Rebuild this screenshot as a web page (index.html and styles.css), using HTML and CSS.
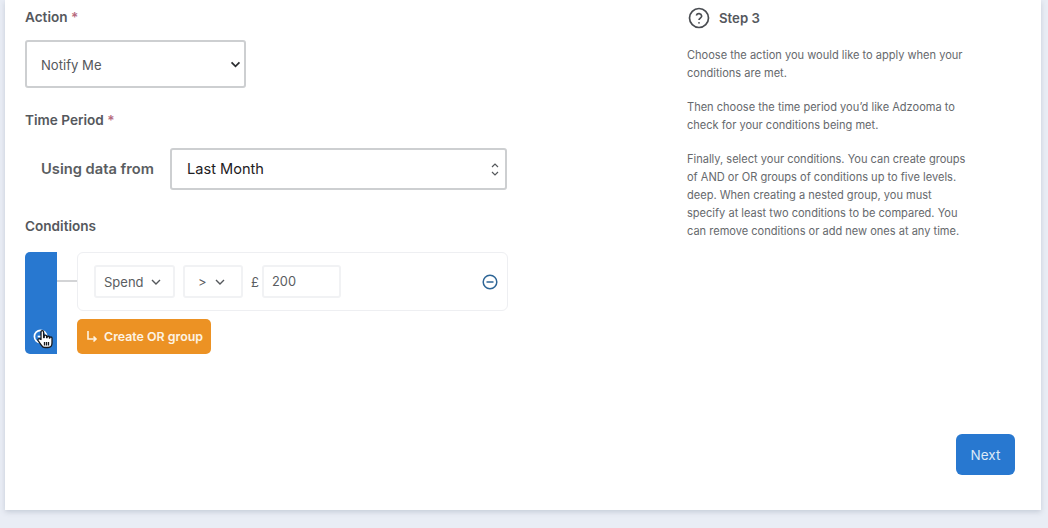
FILE: index.html
```html
<!DOCTYPE html>
<html lang="en">
<head>
<meta charset="utf-8">
<title>Step 3</title>
<link rel="stylesheet" href="styles.css">
</head>
<body>
<main class="card">
  <section class="form">
    <div class="label label-action">Action <span class="req">*</span></div>
    <div class="select select-action">
      <span class="action-text">Notify Me</span>
      <svg class="chev-bold" viewBox="0 0 12 8"><path d="M1.5 1.5 6 6l4.500-4.500"/></svg>
    </div>
    <div class="label label-time">Time Period <span class="req">*</span></div>
    <div class="period">
      <span class="period-label">Using data from</span>
      <div class="select select-period">
        <span>Last Month</span>
        <svg class="updown" viewBox="0 0 8 15"><path d="M1 5l3-3 3 3M1 10l3 3 3-3"/></svg>
      </div>
    </div>
    <div class="label label-cond">Conditions</div>
    <div class="builder">
      <div class="bar">
        <svg class="bar-icon" viewBox="0 0 16 16"><circle cx="8" cy="8" r="6.500"/><path d="M5 8h6"/></svg>
        <svg class="cursor" viewBox="0 0 18 20"><path d="M5.500 10.500V3a1.300 1.300 0 0 1 2.600 0v5.500h.6V7.300a1.200 1.200 0 0 1 2.400 0v1.400h.5V8a1.200 1.200 0 0 1 2.300 0v1h.4a1.100 1.100 0 0 1 2.200 0v5c0 2.500-1.500 4.500-4 4.500H9.500c-1.800 0-2.700-.9-3.500-2.200l-3.400-4.700c-.9-1.400 1-2.600 2-1.400z"/><path class="cursor-lines" d="M9 13v3.500M11 13v3.500M13 13v3.500"/></svg>
      </div>
      <div class="rows">
        <div class="row-wrap">
          <div class="connector"></div>
          <div class="row">
            <div class="mini mini-spend"><span>Spend</span><svg class="chev" viewBox="0 0 10 6"><path d="M1 1l4 4 4-4"/></svg></div>
            <div class="mini mini-op"><span>&gt;</span><svg class="chev" viewBox="0 0 10 6"><path d="M1 1l4 4 4-4"/></svg></div>
            <span class="pound">£</span>
            <div class="mini mini-val">200</div>
            <svg class="remove" viewBox="0 0 16 16"><circle cx="8" cy="8" r="6.800"/><path d="M4.500 8h7"/></svg>
          </div>
        </div>
        <div class="or-btn">
          <svg class="or-icon" viewBox="0 0 12 13"><path d="M2 1v8h8M7.500 6.500 10 9l-2.500 2.500"/></svg>
          <span>Create OR group</span>
        </div>
      </div>
    </div>
  </section>
  <aside class="help">
    <div class="help-head">
      <svg class="help-icon" viewBox="0 0 22 22"><circle cx="11" cy="11" r="9.500"/><path d="M8.300 8.500a2.800 2.800 0 0 1 5.400.6c0 1.900-2.700 2.200-2.700 4"/><circle class="dot" cx="11" cy="15.800" r=".9"/></svg>
      <span>Step 3</span>
    </div>
    <p>Choose the action you would like to apply when your<br>conditions are met.</p>
    <p>Then choose the time period you’d like Adzooma to<br>check for your conditions being met.</p>
    <p>Finally, select your conditions. You can create groups<br>of AND or OR groups of conditions up to five levels.<br>deep. When creating a nested group, you must<br>specify at least two conditions to be compared. You<br>can remove conditions or add new ones at any time.</p>
  </aside>
  <div class="next">Next</div>
</main>
</body>
</html>
```
FILE: styles.css
```css
* { box-sizing: border-box; }
html, body { margin: 0; height: 528px; overflow: hidden; }
body {
  background: #e9edf5;
  font-family: Inter, "Liberation Sans", sans-serif;
  color: #4a4d52;
}
.card {
  position: relative;
  width: 1036px;
  height: 510px;
  margin-left: 5px;
  background: #fff;
  box-shadow: 0 2px 5px rgba(120, 130, 150, .3);
  display: flex;
}
.form { width: 682px; padding: 9px 0 0 20px; flex: none; }
.label { font-size: 13.6px; line-height: 17px; font-weight: 600; color: #55585d; }
.req { color: #b5687c; }
.select {
  display: flex;
  align-items: center;
  justify-content: space-between;
  background: #fff;
  border: 2px solid #cdcfd1;
  border-radius: 3px;
}
.select-action {
  width: 221px;
  height: 48px;
  margin-top: 14px;
  padding: 0 3px 0 14px;
  font-size: 13.1px;
  color: #55585c;
}
.action-text { padding-top: 2px; }
.chev-bold { width: 11px; height: 7px; fill: none; stroke: #2b2d30; stroke-width: 2; }
.label-time { margin-top: 24px; }
.period { display: flex; align-items: center; margin-top: 19px; padding-left: 16px; }
.period-label { width: 129px; font-size: 14.7px; font-weight: 600; color: #5a5d61; }
.select-period {
  width: 337px;
  height: 42px;
  padding: 0 6px 0 15px;
  font-size: 14.6px;
  color: #1e2023;
}
.updown { width: 8px; height: 15px; fill: none; stroke: #55585c; stroke-width: 1.200; }
.label-cond { margin-top: 28px; }
.builder { display: flex; margin-top: 17px; }
.bar {
  position: relative;
  width: 32px;
  height: 102px;
  background: #2878d0;
  border-radius: 5px 0 0 5px;
  flex: none;
}
.bar-icon {
  position: absolute;
  left: 8px;
  top: 77px;
  width: 15px;
  height: 15px;
  fill: none;
  stroke: #fff;
  stroke-width: 1.800;
}
.cursor {
  position: absolute;
  left: 10px;
  top: 77px;
  width: 19px;
  height: 20px;
  fill: #fff;
  stroke: #16181c;
  stroke-width: 1.300;
  stroke-linejoin: round;
}
.cursor-lines { fill: none; }
.rows { margin-left: 20px; }
.row-wrap { position: relative; }
.connector {
  position: absolute;
  left: -20px;
  top: 28px;
  width: 20px;
  height: 2px;
  background: #d3d4d6;
}
.row {
  display: flex;
  align-items: center;
  width: 431px;
  height: 59px;
  padding: 0 9px 0 16px;
  border: 1px solid #eeeff2;
  border-radius: 6px;
  background: #fff;
}
.mini {
  display: flex;
  align-items: center;
  height: 33px;
  border: 2px solid #f1f2f4;
  border-radius: 3px;
  font-size: 13px;
  color: #5a5d61;
}
.mini-spend { width: 81px; padding-left: 8px; }
.mini-op { width: 60px; margin-left: 8px; padding-left: 13px; }
.mini-val { width: 79px; padding-left: 8px; font-size: 12.8px; }
.chev { width: 10px; height: 6px; margin-left: 7px; fill: none; stroke: #55585c; stroke-width: 1.400; }
.mini-op .chev { margin-left: 8px; }
.pound { width: 11px; margin-left: 8px; font-size: 13px; color: #5a5d61; }
.remove {
  width: 16px;
  height: 16px;
  margin-left: auto;
  fill: none;
  stroke: #2d6596;
  stroke-width: 1.500;
}
.or-btn {
  display: flex;
  align-items: center;
  width: 134px;
  height: 35px;
  margin-top: 8px;
  padding-left: 9px;
  background: #ec9224;
  border-radius: 5px;
  color: #fdf3e3;
  font-size: 12.400px;
  font-weight: 600;
}
.or-icon { width: 12px; height: 13px; margin-right: 6px; fill: none; stroke: #fdf3e3; stroke-width: 1.600; }
.help { width: 290px; padding-top: 7px; flex: none; }
.help-head {
  display: flex;
  align-items: center;
  gap: 9px;
  height: 22px;
  margin-left: 1px;
  margin-bottom: 17px;
  font-size: 13.200px;
  font-weight: 600;
  color: #55585d;
}
.help-icon { width: 22px; height: 22px; fill: none; stroke: #4a4d52; stroke-width: 1.700; }
.dot { fill: #4a4d52; stroke: none; }
.help p {
  margin: 0 0 16px;
  font-size: 11.050px;
  line-height: 18px;
  color: #66696d;
}
.next {
  position: absolute;
  right: 26px;
  bottom: 35px;
  display: flex;
  align-items: center;
  justify-content: center;
  width: 59px;
  height: 41px;
  background: #2878d0;
  border-radius: 6px;
  color: #dce9f7;
  font-size: 13.500px;
}
```
